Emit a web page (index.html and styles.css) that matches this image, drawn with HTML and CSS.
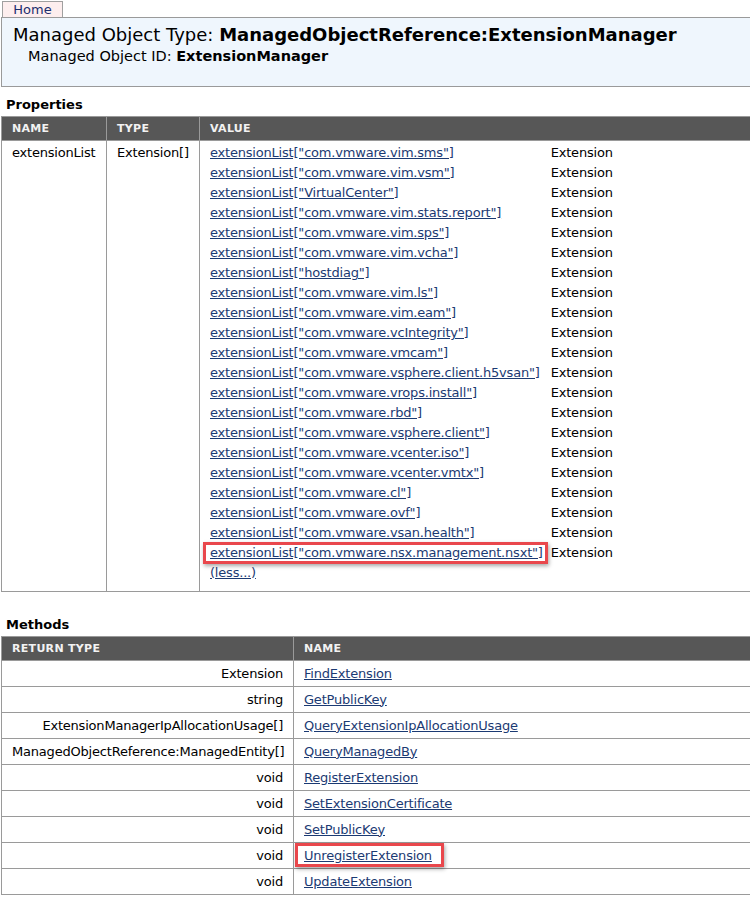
FILE: index.html
```html
<!DOCTYPE html>
<html>
<head>
<meta charset="utf-8">
<title>Managed Object Browser</title>
<link rel="stylesheet" href="styles.css">
</head>
<body>
<div class="page">
  <a class="tab" href="#">Home</a>
  <div class="header">
    <div class="title">Managed Object Type: <b>ManagedObjectReference:ExtensionManager</b></div>
    <div class="subtitle">Managed Object ID: <b>ExtensionManager</b></div>
  </div>

  <h2 class="section">Properties</h2>
  <table class="grid props">
    <colgroup><col class="w-name"><col class="w-type"><col></colgroup>
    <thead>
      <tr><th>NAME</th><th>TYPE</th><th>VALUE</th></tr>
    </thead>
    <tbody>
      <tr>
        <td>extensionList</td>
        <td>Extension[]</td>
        <td class="c-value">
          <div class="values">
            <a href="#">extensionList["com.vmware.vim.sms"]</a><span>Extension</span>
            <a href="#">extensionList["com.vmware.vim.vsm"]</a><span>Extension</span>
            <a href="#">extensionList["VirtualCenter"]</a><span>Extension</span>
            <a href="#">extensionList["com.vmware.vim.stats.report"]</a><span>Extension</span>
            <a href="#">extensionList["com.vmware.vim.sps"]</a><span>Extension</span>
            <a href="#">extensionList["com.vmware.vim.vcha"]</a><span>Extension</span>
            <a href="#">extensionList["hostdiag"]</a><span>Extension</span>
            <a href="#">extensionList["com.vmware.vim.ls"]</a><span>Extension</span>
            <a href="#">extensionList["com.vmware.vim.eam"]</a><span>Extension</span>
            <a href="#">extensionList["com.vmware.vcIntegrity"]</a><span>Extension</span>
            <a href="#">extensionList["com.vmware.vmcam"]</a><span>Extension</span>
            <a href="#">extensionList["com.vmware.vsphere.client.h5vsan"]</a><span>Extension</span>
            <a href="#">extensionList["com.vmware.vrops.install"]</a><span>Extension</span>
            <a href="#">extensionList["com.vmware.rbd"]</a><span>Extension</span>
            <a href="#">extensionList["com.vmware.vsphere.client"]</a><span>Extension</span>
            <a href="#">extensionList["com.vmware.vcenter.iso"]</a><span>Extension</span>
            <a href="#">extensionList["com.vmware.vcenter.vmtx"]</a><span>Extension</span>
            <a href="#">extensionList["com.vmware.cl"]</a><span>Extension</span>
            <a href="#">extensionList["com.vmware.ovf"]</a><span>Extension</span>
            <a href="#">extensionList["com.vmware.vsan.health"]</a><span>Extension</span>
            <span class="hl-cell"><a class="hl" href="#">extensionList["com.vmware.nsx.management.nsxt"]</a></span><span>Extension</span>
            <a href="#">(less...)</a>
          </div>
        </td>
      </tr>
    </tbody>
  </table>

  <h2 class="section methods-title">Methods</h2>
  <table class="grid methods">
    <colgroup><col class="w-ret"><col></colgroup>
    <thead>
      <tr><th>RETURN TYPE</th><th>NAME</th></tr>
    </thead>
    <tbody>
      <tr><td class="c-ret">Extension</td><td><a href="#">FindExtension</a></td></tr>
      <tr><td class="c-ret">string</td><td><a href="#">GetPublicKey</a></td></tr>
      <tr><td class="c-ret">ExtensionManagerIpAllocationUsage[]</td><td><a href="#">QueryExtensionIpAllocationUsage</a></td></tr>
      <tr><td class="c-ret">ManagedObjectReference:ManagedEntity[]</td><td><a href="#">QueryManagedBy</a></td></tr>
      <tr><td class="c-ret">void</td><td><a href="#">RegisterExtension</a></td></tr>
      <tr><td class="c-ret">void</td><td><a href="#">SetExtensionCertificate</a></td></tr>
      <tr><td class="c-ret">void</td><td><a href="#">SetPublicKey</a></td></tr>
      <tr><td class="c-ret">void</td><td><a class="hl hl-wide" href="#">UnregisterExtension</a></td></tr>
      <tr><td class="c-ret">void</td><td><a href="#">UpdateExtension</a></td></tr>
    </tbody>
  </table>
</div>
</body>
</html>
```

FILE: styles.css
```css
html { overflow: hidden; }
body {
  margin: 0;
  font-family: "DejaVu Sans", Verdana, sans-serif;
  font-size: 13px;
  color: #000;
  background: #fff;
}
.page {
  width: 760px;
  padding: 1px 0 0 1px;
}
a { color: #1b3a73; }

.tab {
  display: block;
  width: 59px;
  margin-left: 1px;
  height: 15px;
  line-height: 15px;
  font-size: 13px;
  text-align: center;
  text-decoration: none;
  color: #1b2f6e;
  background: #fdeeee;
  border: 1px solid #a0a0a0;
  border-bottom: none;
}
.header {
  background: #eff6fd;
  border-top: 1px solid #9a9a9a;
  border-bottom: 1px solid #9a9a9a;
  border-left: 1px solid #9a9a9a;
  box-sizing: border-box;
  height: 70px;
  padding: 5px 0 0 11px;
}
.title {
  font-size: 18px;
  line-height: 24px;
}
.subtitle {
  font-size: 14.5px;
  line-height: 18px;
  padding-left: 15px;
}
.section {
  font-size: 13px;
  font-weight: bold;
  margin: 0;
  padding: 10px 0 0 5px;
  line-height: 16px;
  height: 29px;
  box-sizing: border-box;
}
.methods-title {
  height: 44px;
  padding-top: 25px;
}

.grid {
  border-collapse: collapse;
  table-layout: fixed;
  width: 760px;
}
.grid th, .grid td {
  border: 1px solid #9a9a9a;
}
.grid th {
  background: #575757;
  color: #f2f2f2;
  font-size: 11px;
  font-weight: bold;
  text-align: left;
  height: 23px;
  padding: 0 10px;
  letter-spacing: 0.3px;
}
.w-name { width: 105px; }
.w-type { width: 93px; }
.w-ret { width: 292px; }

.props td {
  vertical-align: top;
  line-height: 20px;
  padding: 2px 10px 8px 10px;
  letter-spacing: -0.2px;
}
.values {
  display: grid;
  grid-template-columns: max-content max-content;
  column-gap: 8px;
}
.hl-cell { display: block; }
.hl {
  position: relative;
}
.hl::after {
  content: "";
  position: absolute;
  left: -7px;
  right: -5px;
  top: -3px;
  bottom: -4px;
  border: 3px solid #e9474c;
  box-shadow: 1px 2px 4px rgba(0,0,0,0.35);
  pointer-events: none;
}
.hl-wide::after {
  left: -9px;
  right: -12px;
  top: -5px;
}
.methods td {
  height: 25px;
  padding: 0 10px;
  line-height: 20px;
  letter-spacing: -0.2px;
}
.methods .c-ret {
  text-align: right;
}
```
